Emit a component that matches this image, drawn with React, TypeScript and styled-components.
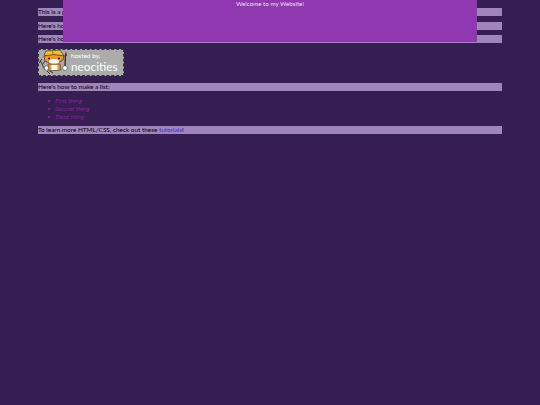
import React from 'react'
import styled, { createGlobalStyle } from 'styled-components'

const GlobalStyle = createGlobalStyle`
  html, body {
    margin: 0;
    padding: 0;
    background: #351e52;
  }
`

const Page = styled.div`
  position: relative;
  box-sizing: border-box;
  width: 540px;
  height: 405px;
  padding: 8px 38px 0;
  overflow: hidden;
  background: #351e52;
  font-family: 'Lato', 'Open Sans', sans-serif;
  font-size: 6.4px;
  color: #000;
`

const Header = styled.header`
  position: absolute;
  top: 0;
  left: 63px;
  width: 414px;
  height: 42px;
  background: #9038b0;
  color: #f0dff5;
  font-size: 6.2px;
  line-height: 8px;
  text-align: center;
`

const Bar = styled.p`
  margin: 0 0 5.5px;
  height: 8px;
  line-height: 8px;
  background: #a085bd;
  white-space: nowrap;
`

const Badge = styled.div`
  box-sizing: border-box;
  display: flex;
  align-items: center;
  width: 86px;
  height: 27px;
  margin: 6px 0 7px;
  background: #ababab;
  border: 1px dashed #3a3a3a;
`

const BadgeText = styled.div`
  display: flex;
  flex-direction: column;
  margin-left: 3px;
  color: #fff;
`

const HostedBy = styled.span`
  font-size: 6.5px;
  line-height: 8px;
`

const BrandName = styled.span`
  font-size: 11.8px;
  line-height: 14px;
`

const List = styled.ul`
  margin: 0;
  padding: 0 0 5.5px 10px;
  list-style: none;
  color: #8f1fa0;
  font-style: italic;
`

const Item = styled.li`
  display: flex;
  align-items: center;
  gap: 5px;
  height: 8px;
  line-height: 8px;
  &::before {
    content: '';
    width: 2px;
    height: 2px;
    border-radius: 50%;
    background: #8f1fa0;
  }
`

const Link = styled.a`
  color: #2a2aee;
  text-decoration: none;
`

const Cat = () => (
  <svg width="29" height="25" viewBox="0 0 29 25">
    <path d="M1 10 L6 20 M0 13 L3 9 M3 15 L6 11" stroke="#3c3c3c" strokeWidth="1" fill="none" />
    <path d="M5 5 L7 1 L21 0 L25 6 L14 8 Z" fill="#f2c227" stroke="#333" strokeWidth="0.7" />
    <path d="M13 0 L15 7" stroke="#b88a10" strokeWidth="1.2" />
    <path d="M5 6 Q15 3 25 6 L24 10 Q15 17 6 11 Z" fill="#f0962e" stroke="#333" strokeWidth="0.7" />
    <ellipse cx="15" cy="11.5" rx="5" ry="2.6" fill="#fff" />
    <circle cx="10" cy="8.5" r="1" fill="#222" />
    <circle cx="20" cy="8.5" r="1" fill="#222" />
    <path d="M9 14 L21 14 L22 20 L10 21 Z" fill="#f0962e" stroke="#333" strokeWidth="0.6" />
    <path d="M12.5 15 L18.5 15 L18.5 20 L12.5 20 Z" fill="#fff" />
    <circle cx="7.5" cy="18" r="2.2" fill="#fff" stroke="#333" strokeWidth="0.5" />
    <path d="M26.5 5 L26 16" stroke="#4a2a20" strokeWidth="1.4" />
    <path d="M27 1 L28 6 L25.5 6 Z" fill="#6d2030" />
    <circle cx="26" cy="18" r="2.3" fill="#fff" stroke="#333" strokeWidth="0.5" />
    <path d="M8 21 L11 24 M11 21 L14 23" stroke="#333" strokeWidth="1" />
  </svg>
)

export default function App() {
  return (
    <>
      <GlobalStyle />
      <Page>
        <Header>Welcome to my Website!</Header>
        <Bar>This is a paragraph!</Bar>
        <Bar>Here's how you can make text bold and italic.</Bar>
        <Bar>Here's how you can add an image:</Bar>
        <Badge>
          <Cat />
          <BadgeText>
            <HostedBy>hosted by,</HostedBy>
            <BrandName>neocities</BrandName>
          </BadgeText>
        </Badge>
        <Bar>Here's how to make a list:</Bar>
        <List>
          <Item>First thing</Item>
          <Item>Second thing</Item>
          <Item>Third thing</Item>
        </List>
        <Bar>
          To learn more HTML/CSS, check out these <Link href="#">tutorials</Link>!
        </Bar>
      </Page>
    </>
  )
}
